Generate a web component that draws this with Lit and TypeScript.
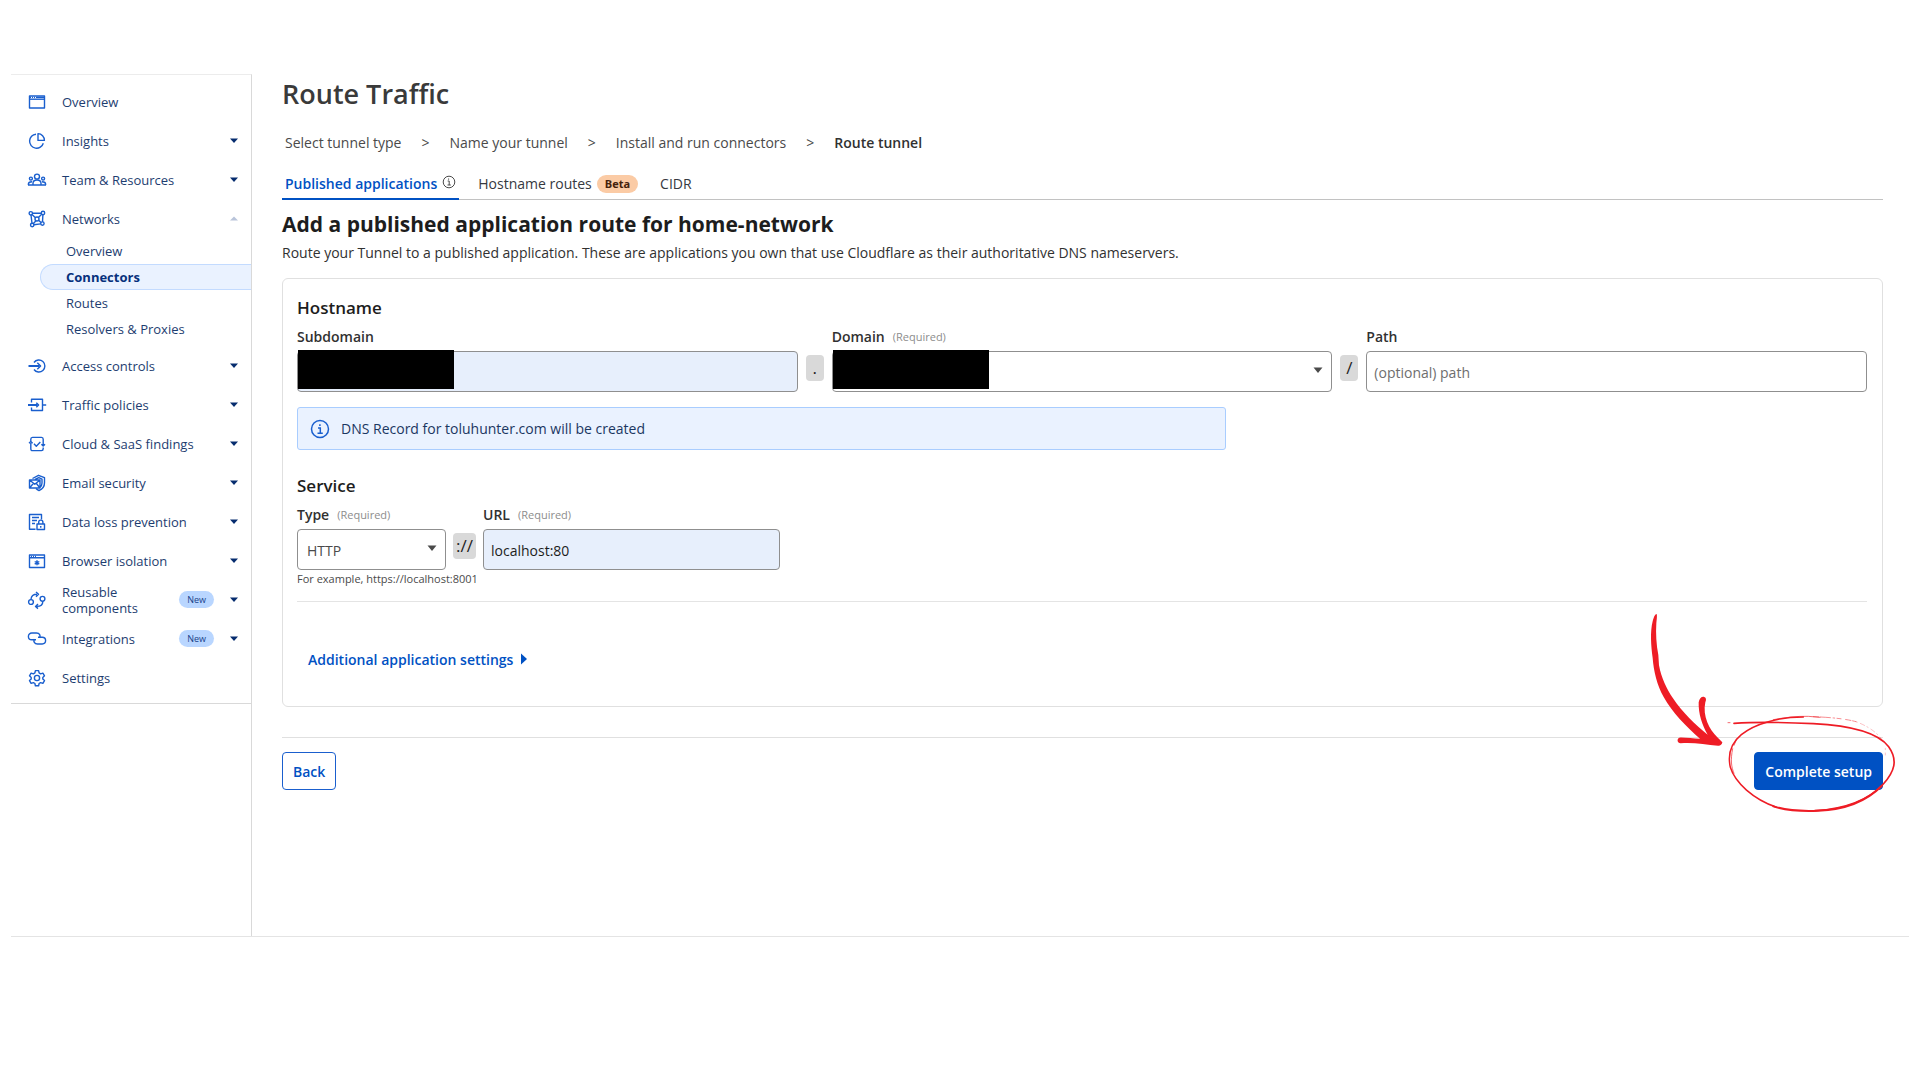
import { LitElement, html, svg, css, nothing } from "lit";
import type { SVGTemplateResult } from "lit";
import { customElement, property } from "lit/decorators.js";
import { classMap } from "lit/directives/class-map.js";

interface NavEntry {
  label: string;
  icon: string;
  caret?: boolean;
  isNew?: boolean;
  children?: { label: string; active?: boolean }[];
}

const NAV: NavEntry[] = [
  { label: "Overview", icon: "window" },
  { label: "Insights", icon: "pie", caret: true },
  { label: "Team & Resources", icon: "team", caret: true },
  {
    label: "Networks",
    icon: "network",
    children: [
      { label: "Overview" },
      { label: "Connectors", active: true },
      { label: "Routes" },
      { label: "Resolvers & Proxies" },
    ],
  },
  { label: "Access controls", icon: "access", caret: true },
  { label: "Traffic policies", icon: "traffic", caret: true },
  { label: "Cloud & SaaS findings", icon: "cloud", caret: true },
  { label: "Email security", icon: "email", caret: true },
  { label: "Data loss prevention", icon: "dlp", caret: true },
  { label: "Browser isolation", icon: "browser", caret: true },
  { label: "Reusable components", icon: "reuse", caret: true, isNew: true },
  { label: "Integrations", icon: "link", caret: true, isNew: true },
  { label: "Settings", icon: "gear" },
];

const ICONS: Record<string, SVGTemplateResult> = {
  window: svg`<rect x="2.5" y="4" width="15" height="12" /><path d="M2.5 7.2h15" /><path d="M3 5.4h14" stroke-width="1.4" stroke-dasharray="1 1 1 1 1 1 20" />`,
  pie: svg`<path d="M9 3.200a7 7 0 1 0 7.300 9" /><path d="M11 2.600v6.800h6.400a6.600 6.600 0 0 0-6.400-6.800z" />`,
  team: svg`<circle cx="10" cy="6.6" r="2.5" /><path d="M6 15v-1.8c0-2 1.500-3.200 4-3.200s4 1.200 4 3.200V15" /><circle cx="3.900" cy="8.600" r="1.500" /><circle cx="16.100" cy="8.600" r="1.500" /><path d="M1.400 15v-1c0-1.600 1-2.300 3.600-2.300M18.600 15v-1c0-1.600-1-2.300-3.600-2.300M1 15h18" />`,
  network: svg`<circle cx="3.800" cy="4.300" r="1.700" /><circle cx="16" cy="4" r="1.700" /><circle cx="10" cy="10" r="2" /><circle cx="5.200" cy="16" r="1.700" /><circle cx="15.400" cy="14.600" r="1.700" /><path d="M5.500 4.200h8.800M4 6l1 8.300M6.900 15.700l6.800-.8M15.900 5.700l-.4 7.200M5 5.500l3.500 3.200M14.700 5.200l-3.300 3.300M9 11.700l-2.800 3M11.600 11.200l2.400 2.400" />`,
  access: svg`<path d="M7 6.500a6 6 0 1 1 0 7" /><path d="M1.500 10h11" stroke-width="2" /><path d="M10.300 6.700L13.600 10l-3.300 3.300" />`,
  traffic: svg`<path d="M4.500 7.500V4.300h11v11.200h-11v-3M15.500 10h3.700" /><path d="M1 10h9.500" stroke-width="2" /><path d="M9.300 7.700L11.600 10 9.300 12.300" />`,
  cloud: svg`<path d="M3.800 8V5.200C3.800 4 4.400 3.400 5.500 3.400h9c1.100 0 1.700.6 1.700 1.800V12M16.200 13.500v1.300c0 1.200-.6 1.800-1.700 1.800h-9c-1.100 0-1.700-.6-1.700-1.800V9M2 9.300l1.800-1.700 1.800 1.700M14.400 10.300l1.800 1.800 1.800-1.800M7 9.700l2.300 2.500 4-4.300" />`,
  email: svg`<path d="M5.500 5.500L11.500 2.300l6 2.400v5c0 3.500-2.200 6.400-5.500 7.800-1.300-.5-2.200-1.100-3-2" /><path d="M2.500 7h10.500v8H2.500zM2.500 7l5.300 4.300L13 7M2.500 15l3.800-4.500M13 15l-3.600-4.500M8 6.500l3.800-1.800 3.200 1.400v4c0 2-1 3.500-2 4.300" />`,
  dlp: svg`<path d="M8.500 17.300h-6V2.500h12v5M5 5.500h7M5 8.500h5M5 11.500h3" /><rect x="10" y="12" width="7.500" height="5.500" /><path d="M11.700 12v-1.800c0-2.800 4.200-2.800 4.200 0V12M13.750 14v1.700" />`,
  browser: svg`<rect x="2.500" y="4" width="15" height="12.500" /><path d="M2.500 6.800h15M4 5.400h1M6 5.400h1M8 5.400h1" /><path d="M10 9.300v5M7.700 10.500l4.600 2.600M12.300 10.500l-4.600 2.600" />`,
  reuse: svg`<circle cx="4" cy="12" r="2.400" /><circle cx="15.500" cy="8.800" r="2.400" /><path d="M4 9.300c.2-3 2.500-5 6-5M9 2l2.500 2.300L9 6.700M15.800 11.500c0 3-2.500 4.900-6 4.900M11 14l-2.500 2.400L11 18.600" />`,
  link: svg`<path d="M9 10.800H4.800a3.400 3.400 0 0 1 0-6.800h4.700c3 0 4.500 2.600 3 4.800" /><path d="M11 8.200h4.200a3.400 3.400 0 0 1 0 6.800h-4.700c-3 0-4.500-2.600-3-4.800" />`,
  gear: svg`<circle cx="10" cy="10" r="2.600" /><path d="M8.400 2.600h3.200l.5 2.300 1.500.9 2.300-.7 1.600 2.700-1.700 1.600v1.600l1.700 1.600-1.600 2.700-2.300-.7-1.500.9-.5 2.300H8.400l-.5-2.300-1.500-.9-2.300.7-1.600-2.700 1.700-1.600v-1.600L2.500 7.800l1.600-2.700 2.300.7 1.500-.9z" />`,
};

@customElement("nav-icon")
export class NavIcon extends LitElement {
  @property() name = "";

  static styles = css`
    :host { display: block; width: 20px; height: 20px; flex: none; }
    .glyph { display: block; width: 20px; height: 20px; fill: none; stroke: #1a5fce; stroke-width: 1.4; stroke-linejoin: round; }
  `;

  render() {
    return html`<svg class="glyph" viewBox="0 0 20 20" aria-hidden="true">${ICONS[this.name] ?? nothing}</svg>`;
  }
}

@customElement("side-nav")
export class SideNav extends LitElement {
  static styles = css`
    :host { display: block; width: 241px; flex: none; box-sizing: border-box; border-right: 1px solid #d9d9d9; border-top: 1px solid #ececec; font-family: "Open Sans", "Noto Sans", sans-serif; }
    .nav { padding: 7px 0 6px; border-bottom: 1px solid #d9d9d9; }
    .list { list-style: none; margin: 0; padding: 0; }
    .row { all: unset; box-sizing: border-box; display: flex; align-items: center; width: 100%; height: 39px; padding: 0 10px 0 16px; cursor: pointer; color: #1d3d70; font-size: 13px; line-height: 16px; }
    .label { flex: 1; margin-left: 15px; }
    .pill { margin-right: 13px; padding: 0 8px; border-radius: 9px; background: #b9d6ff; color: #17428a; font-size: 9px; line-height: 17px; }
    .caret { width: 14px; height: 14px; fill: #062c6e; }
    .muted { fill: #b9c4da; }
    .sub { list-style: none; margin: 0; padding: 0 0 4px 29px; }
    .sublink { display: block; box-sizing: border-box; height: 26px; padding-left: 26px; color: #1d3d70; font-size: 13px; line-height: 26px; text-decoration: none; }
    .active { border: 1px solid #c3dbff; border-right: 0; border-radius: 13px 0 0 13px; padding-left: 25px; background: #eaf2ff; color: #06307c; font-weight: 700; line-height: 25px; }
  `;

  private row(item: NavEntry) {
    return html`<li>
      <button class="row" type="button">
        <nav-icon name=${item.icon}></nav-icon>
        <span class="label">${item.label}</span>
        ${item.isNew ? html`<span class="pill">New</span>` : nothing}
        ${item.caret ? html`<svg class="caret" viewBox="0 0 14 14"><path d="M3 4.500h8L7 9z" /></svg>` : nothing}
        ${item.children ? html`<svg class="caret muted" viewBox="0 0 14 14"><path d="M3 8.500h8L7 4.500z" /></svg>` : nothing}
      </button>
      ${item.children
        ? html`<ul class="sub">
            ${item.children.map(
              (c) => html`<li><a href="#" class=${classMap({ sublink: true, active: !!c.active })}>${c.label}</a></li>`
            )}
          </ul>`
        : nothing}
    </li>`;
  }

  render() {
    return html`<nav class="nav" aria-label="Main">
      <ul class="list">${NAV.map((n) => this.row(n))}</ul>
    </nav>`;
  }
}

@customElement("app-root")
export class AppRoot extends LitElement {
  static styles = css`
    :host { display: block; font-family: "Open Sans", "Noto Sans", sans-serif; color: #1d1d1d; background: #fff; }
    .page { box-sizing: border-box; min-height: 100vh; display: flex; padding: 74px 11px 143px; }
    .shell { flex: 1; display: flex; border-bottom: 1px solid #e4e4e4; }
    .main { flex: 1; min-width: 0; padding: 0 26px 0 30px; }
    .title { margin: 0; font-size: 27px; line-height: 40px; font-weight: 600; color: #3a3a3a; }
    .crumbs { display: flex; gap: 20px; list-style: none; margin: 17px 0 0; padding: 0 3px; font-size: 14px; line-height: 24px; color: #4a4a4a; }
    .current { font-weight: 600; color: #313131; }
    .tabs { display: flex; align-items: center; gap: 16px; margin-top: 13px; height: 31px; border-bottom: 1px solid #c2c2c2; }
    .tab { all: unset; box-sizing: border-box; display: flex; align-items: center; gap: 5px; height: 32px; padding: 0 3px; font-size: 14px; line-height: 24px; cursor: pointer; color: #36393f; font-weight: 500; }
    .selected { color: #0051c3; border-bottom: 2px solid #0051c3; font-weight: 600; padding-top: 2px; }
    .tip { width: 14px; height: 14px; margin-bottom: 3px; fill: none; stroke: #4a4a4a; stroke-width: 1; }
    .beta { padding: 0 8px; border-radius: 9px; background: #fbcba5; color: #44210b; font-size: 11px; line-height: 18px; font-weight: 700; }
    .heading { margin: 10px 0 2px; font-size: 21px; line-height: 28px; font-weight: 700; }
    .intro { margin: 0; font-size: 14px; line-height: 26px; color: #313131; }
    .card { margin-top: 12px; padding: 16px 15px 33px 14px; border: 1px solid #e0e0e0; border-radius: 6px; }
    .section { margin: 0; font-size: 17px; line-height: 26px; font-weight: 600; }
    .host { display: grid; grid-template-columns: 1fr 18px 1fr 18px 1fr; column-gap: 8px; align-items: end; margin-top: 6px; }
    .service { display: grid; grid-template-columns: 149px 23px 297px; column-gap: 7px; align-items: end; margin-top: 6px; }
    .label { display: flex; align-items: center; gap: 8px; font-size: 14px; line-height: 20px; padding-bottom: 4px; font-weight: 600; color: #313131; }
    .req { font-size: 11px; font-weight: 400; color: #8d8d8d; }
    .box { position: relative; display: block; }
    .input { box-sizing: border-box; display: block; width: 100%; height: 41px; margin: 0; padding: 2px 7px 0; border: 1px solid #8f8f8f; border-radius: 4px; background: #fff; color: #1d1d1d; font: 14px/20px "Open Sans", "Noto Sans", sans-serif; appearance: none; }
    .input::placeholder { color: #6e6e6e; opacity: 1; }
    .filled { background: #e7effc; }
    .pick { padding-left: 9px; color: #4a4a4a; }
    .arrow { position: absolute; right: 8px; top: 13px; width: 12px; height: 12px; fill: #4a4a4a; pointer-events: none; }
    .redact { position: absolute; left: 1px; top: -1px; width: 156px; height: 39px; background: #000; }
    .sep { align-self: end; margin-bottom: 11px; border-radius: 4px; background: #d9d9d9; font-size: 17px; line-height: 26px; text-align: center; }
    .note { box-sizing: border-box; display: flex; align-items: center; gap: 11px; width: 59.2%; margin: 15px 0 23px; padding: 0 12px; height: 43px; border: 1px solid #a9cdff; border-radius: 3px; background: #eaf2ff; color: #1b3762; font-size: 14px; line-height: 20px; }
    .info { width: 20px; height: 20px; fill: none; stroke: #1a5fce; stroke-width: 1.5; }
    .help { margin: 0; font-size: 11px; line-height: 18px; color: #4a4a4a; }
    .rule { margin: 13px 0 0; border: 0; border-top: 1px solid #e4e4e4; }
    .more { all: unset; display: inline-flex; align-items: center; gap: 7px; margin: 45px 0 0 11px; font-size: 14px; line-height: 26px; font-weight: 600; color: #0051c3; cursor: pointer; }
    .tri { width: 8px; height: 12px; margin-bottom: 2px; fill: #0051c3; }
    .actions { position: relative; display: flex; justify-content: space-between; margin-top: 30px; padding-top: 14px; border-top: 1px solid #e0e0e0; }
    .btn { box-sizing: border-box; height: 38px; padding: 2px 10px 0; border: 1px solid #1a5fce; border-radius: 4px; background: #fff; color: #0051c3; font: 600 14px/20px "Open Sans", "Noto Sans", sans-serif; cursor: pointer; }
    .primary { background: #0051c3; color: #fff; border-color: #0051c3; }
    .sketch { position: absolute; right: -17px; top: -128px; width: 255px; height: 207px; fill: none; stroke: #ee1c25; stroke-linecap: round; stroke-linejoin: round; pointer-events: none; }
  `;

  private required = html`<span class="req">(Required)</span>`;

  render() {
    return html`<div class="page"><div class="shell">
      <side-nav></side-nav>
      <main class="main">
        <h1 class="title">Route Traffic</h1>
        <ol class="crumbs">
          <li>Select tunnel type</li><li aria-hidden="true">&gt;</li>
          <li>Name your tunnel</li><li aria-hidden="true">&gt;</li>
          <li>Install and run connectors</li><li aria-hidden="true">&gt;</li>
          <li class="current">Route tunnel</li>
        </ol>
        <div class="tabs" role="tablist">
          <button class="tab selected" role="tab" aria-selected="true">Published applications
            <svg class="tip" viewBox="0 0 14 14"><circle cx="7" cy="7" r="5.800" /><path d="M5.700 6h1.500v4M5.500 10h3.300M6.600 3.500v1.200" /></svg>
          </button>
          <button class="tab" role="tab">Hostname routes <span class="beta">Beta</span></button>
          <button class="tab" role="tab">CIDR</button>
        </div>
        <h2 class="heading">Add a published application route for home-network</h2>
        <p class="intro">Route your Tunnel to a published application. These are applications you own that use Cloudflare as their authoritative DNS nameservers.</p>

        <form class="card">
          <h3 class="section">Hostname</h3>
          <div class="host">
            <div>
              <label class="label" for="subdomain">Subdomain</label>
              <span class="box"><input class="input filled" id="subdomain" type="text" /><span class="redact"></span></span>
            </div>
            <span class="sep">.</span>
            <div>
              <label class="label" for="domain">Domain ${this.required}</label>
              <span class="box">
                <select class="input" id="domain"><option></option></select>
                <span class="redact"></span>
                <svg class="arrow" viewBox="0 0 12 12"><path d="M1.500 3.500h9L6 9z" /></svg>
              </span>
            </div>
            <span class="sep">/</span>
            <div>
              <label class="label" for="path">Path</label>
              <input class="input" id="path" type="text" placeholder="(optional) path" />
            </div>
          </div>
          <div class="note">
            <svg class="info" viewBox="0 0 20 20"><circle cx="10" cy="10" r="8.500" /><path d="M8 9h2.300v5M7.500 14.200h5.300M9.900 5.200v1.800" /></svg>
            <span>DNS Record for toluhunter.com will be created</span>
          </div>

          <h3 class="section">Service</h3>
          <div class="service">
            <div>
              <label class="label" for="type">Type ${this.required}</label>
              <span class="box">
                <select class="input pick" id="type"><option>HTTP</option></select>
                <svg class="arrow" viewBox="0 0 12 12"><path d="M1.500 3.500h9L6 9z" /></svg>
              </span>
            </div>
            <span class="sep">://</span>
            <div>
              <label class="label" for="url">URL ${this.required}</label>
              <input class="input filled" id="url" type="text" .value=${"localhost:80"} />
            </div>
          </div>
          <p class="help">For example, https://localhost:8001</p>
          <hr class="rule" />
          <button class="more" type="button">Additional application settings
            <svg class="tri" viewBox="0 0 8 12"><path d="M1 0.500L7 6L1 11.500z" /></svg>
          </button>
        </form>

        <div class="actions">
          <button class="btn" type="button">Back</button>
          <button class="btn primary" type="button">Complete setup</button>
          <svg class="sketch" viewBox="135 60 765 621" aria-hidden="true">
            <path fill="#ee1c25" stroke="none" d="M170 72C172 78 170 88 169 100C167 130 169 165 175 195L177 226C184 264 200 297 219 325C247 367 286 404 323 434C306 405 295 371 296 337C298 325 305 319 313 321C319 323 319 329 316 337C307 378 328 419 352 442L367 457C366 464 360 468 354 467C317 464 276 456 242 460C231 459 230 446 238 443C256 442 278 446 300 446C257 409 217 367 191 321C171 285 161 244 158 204C153 168 150 125 158 94C161 83 165 71 170 72Z" />
            <path stroke-width="5" d="M402 400C480 395 560 397 640 401C760 407 835 430 866 470C895 511 883 545 850 582C805 631 730 657 645 662" />
            <path stroke-width="6" d="M845 588C800 633 740 659 655 662C610 664 558 661 520 649" />
            <path stroke-width="4.500" d="M530 652C460 628 405 578 391 532C384 500 390 462 424 434C448 414 476 403 505 395C540 385 575 381 610 381" />
            <path stroke-width="2" d="M520 389C550 383 590 378 625 379L660 382M402 550C394 532 391 510 398 476M402 466L410 447M384 398h6" />
            <path stroke-width="1.500" stroke-dasharray="16 5 30 8 5 7 12 14" d="M640 380C690 382 735 386 768 395" />
            <path stroke-width="0.800" stroke-dasharray="4 10 14 8" d="M768 395C800 407 827 424 845 447M856 475v20" />
          </svg>
        </div>
      </main>
    </div></div>`;
  }
}
